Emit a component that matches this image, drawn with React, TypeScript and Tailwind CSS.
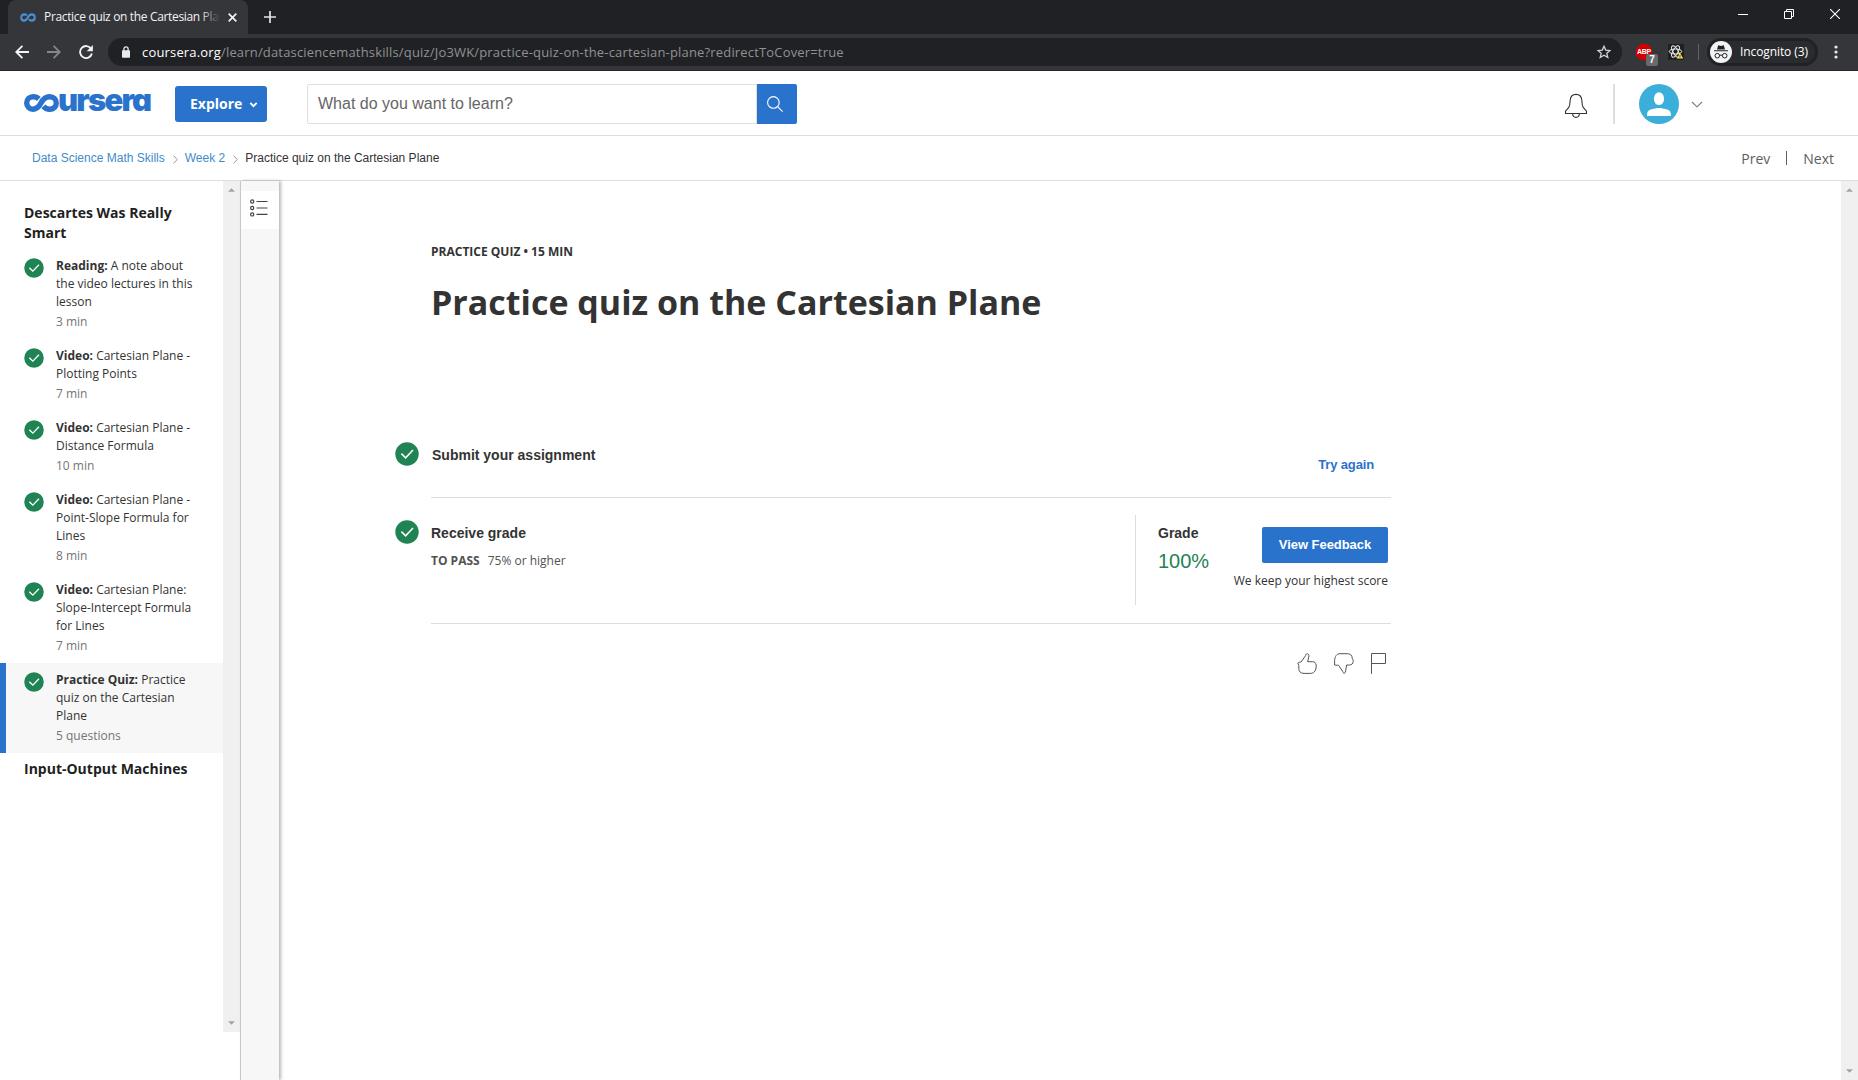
import React from "react";

const openSans = "font-['Open_Sans',sans-serif]";
const arial = "font-['Liberation_Sans',Arial,sans-serif]";

function Check({ size }: { size: number }) {
  return (
    <svg width={size} height={size} viewBox="0 0 24 24" className="block shrink-0">
      <circle cx="12" cy="12" r="11.7" fill="#1f8354" />
      <path d="M6.4 11.6 L10.6 15.8 L18 8" fill="none" stroke="#fff" strokeWidth="1.6" />
    </svg>
  );
}

function CourseraLoop({ width, height, stroke, color }: { width: number; height: number; stroke: number; color: string }) {
  return (
    <svg width={width} height={height} viewBox="0 0 36 18" className="block shrink-0" preserveAspectRatio="none">
      <path
        d="M15.2 5 C13.6 3.3 11.6 2.8 9.4 2.8 C5.6 2.8 2.8 5.6 2.8 9 C2.8 12.4 5.4 15.2 9.2 15.2 C13.2 15.2 15.2 12.9 17.2 9.4 C19.4 5.3 21.8 2.8 26.4 2.8 C30.4 2.8 33.2 5.6 33.2 9 C33.2 12.4 30.4 15.2 26.4 15.2 C23.6 15.2 21.6 14.2 20 12.2"
        fill="none"
        stroke={color}
        strokeWidth={stroke}
      />
    </svg>
  );
}

function TabStrip() {
  return (
    <div className="flex h-[34px] bg-[#202124]">
      <div className="ml-2 flex h-[34px] w-[240px] items-center rounded-t-lg bg-[#35363a] pl-3">
        <CourseraLoop width={16} height={9} stroke={4.6} color="#4a90d9" />
        <div className={`${openSans} relative ml-2 w-[176px] overflow-hidden text-[12px] leading-[18px] tracking-[-0.34px] whitespace-nowrap text-[#f1f3f4]`}>
          Practice quiz on the Cartesian Plane
          <div className="absolute top-0 right-0 h-full w-5 bg-linear-to-r from-transparent to-[#35363a]" />
        </div>
        <svg width="9" height="9" viewBox="0 0 9 9" className="ml-[8px]">
          <path d="M0.7 0.7 L8.3 8.3 M8.3 0.7 L0.7 8.3" stroke="#f1f3f4" strokeWidth="1.7" />
        </svg>
      </div>
      <svg width="12" height="12" viewBox="0 0 12 12" className="mt-[11px] ml-4">
        <path d="M6 0 V12 M0 6 H12" stroke="#e3e4e6" strokeWidth="1.7" />
      </svg>
      <div className="ml-auto flex items-start pt-[9px]">
        <svg width="10" height="11" viewBox="0 0 10 11" className="mr-9">
          <path d="M0 5.5 H10" stroke="#fff" />
        </svg>
        <svg width="10" height="10" viewBox="0 0 10 10" className="mr-9" fill="none" stroke="#fff">
          <path d="M0.5 2.5 H7.5 V9.5 H0.5 Z M2.5 2.5 V0.5 H9.5 V7.5 H7.5" />
        </svg>
        <svg width="10" height="10" viewBox="0 0 10 10" className="mr-[18px]">
          <path d="M0 0 L10 10 M10 0 L0 10" stroke="#fff" strokeWidth="1.1" />
        </svg>
      </div>
    </div>
  );
}

function Toolbar() {
  return (
    <div className="flex h-[37px] items-center border-b border-[#242527] bg-[#35363a]">
      <svg width="14" height="14" viewBox="0 0 14 14" className="ml-[15px]" fill="none" stroke="#f1f3f4" strokeWidth="1.8">
        <path d="M14 7 H1.4 M7.4 0.8 L1.2 7 L7.4 13.2" />
      </svg>
      <svg width="14" height="14" viewBox="0 0 14 14" className="ml-[18px]" fill="none" stroke="#85868a" strokeWidth="1.8">
        <path d="M0 7 H12.6 M6.6 0.8 L12.8 7 L6.6 13.2" />
      </svg>
      <svg width="14" height="14" viewBox="0 0 14 14" className="ml-[18px]">
        <path d="M12.2 3.9 A6 6 0 1 0 12.9 8.6" fill="none" stroke="#f1f3f4" strokeWidth="1.9" />
        <path d="M13.9 0 V6.2 H7.7 Z" fill="#f1f3f4" />
      </svg>
      <div className="ml-[15px] flex h-7 w-[1514px] items-center rounded-full bg-[#202124]">
        <svg width="8" height="12" viewBox="0 0 8 12" className="ml-[14px]">
          <path d="M1.9 5 V3 A2.1 2.1 0 0 1 6.1 3 V5" fill="none" stroke="#e8eaed" strokeWidth="1.3" />
          <rect x="0" y="4.2" width="8" height="7.6" rx="0.8" fill="#e8eaed" />
        </svg>
        <div className={`${openSans} ml-3 text-[13px] leading-5 tracking-[0.17px] whitespace-nowrap text-[#8f9195]`}>
          <span className="text-white">coursera.org</span>/learn/datasciencemathskills/quiz/Jo3WK/practice-quiz-on-the-cartesian-plane?redirectToCover=true
        </div>
        <svg width="14" height="14" viewBox="0 0 14 14" className="mr-[11px] ml-auto">
          <path d="M7 1.2 L8.7 5.1 L13 5.5 L9.8 8.3 L10.8 12.5 L7 10.3 L3.2 12.5 L4.2 8.3 L1 5.5 L5.3 5.1 Z" fill="none" stroke="#d0d2d5" strokeWidth="1.3" />
        </svg>
      </div>
      <div className="relative ml-[14px] h-4 w-4">
        <svg width="16" height="16" viewBox="0 0 16 16">
          <path d="M4.7 0 H11.3 L16 4.7 V11.3 L11.3 16 H4.7 L0 11.3 V4.7 Z" fill="#cf0000" />
        </svg>
        <div className={`${arial} absolute top-1 left-[1px] text-[7px] leading-[8px] font-bold tracking-[-0.3px] text-white`}>ABP</div>
        <div className={`${arial} absolute top-[10px] left-[10px] h-3 w-3 rounded-[2px] bg-[#68696b] text-center text-[10px] leading-3 font-bold text-white`}>7</div>
      </div>
      <svg width="16" height="16" viewBox="0 0 16 16" className="ml-4">
        <rect width="16" height="16" fill="#202020" />
        <g fill="none" stroke="#e8e8e8" strokeWidth="1">
          <ellipse cx="7.5" cy="7.5" rx="6.3" ry="2.5" />
          <ellipse cx="7.5" cy="7.5" rx="6.3" ry="2.5" transform="rotate(60 7.5 7.5)" />
          <ellipse cx="7.5" cy="7.5" rx="6.3" ry="2.5" transform="rotate(120 7.5 7.5)" />
        </g>
        <path d="M12 9 L15.3 14.6 H8.7 Z" fill="#f4e63c" />
        <path d="M12 11 V13.6" stroke="#555" />
      </svg>
      <div className="ml-[14px] h-4 w-px bg-[#606164]" />
      <div className="ml-2 flex h-7 w-[111px] items-center rounded-full border-[3px] border-[#202124] bg-[#2a2b2e]">
        <svg width="22" height="22" viewBox="0 0 22 22" className="shrink-0">
          <circle cx="11" cy="11" r="11" fill="#f1f3f4" />
          <path d="M7 8.5 L8.2 4.2 L11 4.9 L13.8 4.2 L15 8.5 Z M4 9.3 H18 V10.3 H4 Z" fill="#202124" />
          <g fill="none" stroke="#202124" strokeWidth="1">
            <circle cx="7.3" cy="14.7" r="2.3" />
            <circle cx="14.7" cy="14.7" r="2.3" />
            <path d="M9.6 14.4 Q11 13.7 12.4 14.4" />
          </g>
        </svg>
        <div className={`${openSans} ml-2 text-[12px] leading-4 tracking-[-0.1px] whitespace-nowrap text-white`}>Incognito (3)</div>
      </div>
      <svg width="4" height="14" viewBox="0 0 4 14" className="ml-4" fill="#e8eaed">
        <circle cx="2" cy="2" r="1.6" />
        <circle cx="2" cy="7" r="1.6" />
        <circle cx="2" cy="12" r="1.6" />
      </svg>
    </div>
  );
}

function SiteHeader() {
  return (
    <header className="flex h-[65px] items-center border-b border-[#dedede] bg-white pt-px">
      <div className="-mt-[2px] ml-6 flex h-[18px] w-[128px] items-center text-[#2a73cc]">
        <CourseraLoop width={35} height={18} stroke={5.6} color="#2a73cc" />
        <span className="relative -top-[3px] -ml-px font-['Inter',sans-serif] text-[31px] leading-[18px] font-black tracking-[-1.8px] [font-feature-settings:'cv11']">ursera</span>
      </div>
      <div className={`${openSans} ml-[23px] flex h-9 w-[92px] items-center rounded-[3px] bg-[#2a73cc] pl-[15px] text-[14px] font-bold text-white`}>
        Explore
        <svg width="9" height="6" viewBox="0 0 8 6" className="mt-[2px] ml-[7px]">
          <path d="M0.8 0.8 L4 4.2 L7.2 0.8" fill="none" stroke="#fff" strokeWidth="1.8" />
        </svg>
      </div>
      <div className="ml-10 flex h-10">
        <div className={`${arial} w-[450px] rounded-l-[2px] border border-[#dedede] pl-[10px] text-[16px] leading-[37px] text-[#666]`}>What do you want to learn?</div>
        <div className="flex w-10 items-center rounded-r-[2px] bg-[#2a73cc] pl-[10px]">
          <svg width="16" height="16" viewBox="0 0 16 16" fill="none" stroke="#fff" strokeWidth="1.1">
            <circle cx="6.4" cy="6.4" r="5.8" />
            <path d="M10.6 10.6 L15.6 15.6" />
          </svg>
        </div>
      </div>
      <svg width="24" height="26" viewBox="0 0 24 26" className="mt-[4px] ml-[767px]" fill="none" stroke="#333" strokeWidth="1.1">
        <path d="M1.5 20.5 V18.2 L4.8 14.4 C5.8 12.6 6 11 6.2 7.2 C6.6 3.2 9 1.4 12 1.4 C15 1.4 17.4 3.2 17.8 7.2 C18 11 18.2 12.6 19.2 14.4 L22.5 18.2 V20.5 Z" />
        <path d="M8.6 20.8 C8.8 25.6 15.2 25.6 15.4 20.8" />
      </svg>
      <div className="ml-[25px] h-10 w-[2px] bg-[#dedede]" />
      <svg width="40" height="40" viewBox="0 0 40 40" className="ml-6">
        <circle cx="20" cy="20" r="20" fill="#3caeda" />
        <ellipse cx="20" cy="14.7" rx="5.1" ry="6.4" fill="#fff" />
        <path d="M8 32 C8 27 9.5 25.8 14 25 C18 23.8 22 23.8 26 25 C30.5 25.8 32 27 32 32 Z" fill="#fff" />
      </svg>
      <svg width="12" height="7" viewBox="0 0 12 7" className="mt-[2px] ml-3">
        <path d="M1 1 L6 5.8 L11 1" fill="none" stroke="#777" strokeWidth="1.1" />
      </svg>
    </header>
  );
}

function Separator() {
  return (
    <svg width="5" height="9" viewBox="0 0 5 9" className="mt-[3px] mr-[7px] ml-2">
      <path d="M0.6 0.6 L4.2 4.5 L0.6 8.4" fill="none" stroke="#999" />
    </svg>
  );
}

function Breadcrumbs() {
  return (
    <nav className={`${arial} flex h-[45px] items-center border-b border-[#dedede] pl-8 text-[12px] text-[#428bca]`}>
      <span>Data Science Math Skills</span>
      <Separator />
      <span>Week 2</span>
      <Separator />
      <span className="text-[#333]">Practice quiz on the Cartesian Plane</span>
      <div className={`${openSans} mr-6 ml-auto flex items-center text-[14px] text-[#5e5e5e]`}>
        <span>Prev</span>
        <span className="mx-4 h-[14px] w-px bg-[#5e5e5e]" />
        <span>Next</span>
      </div>
    </nav>
  );
}

type Item = { kind: string; lines: string[]; meta: string; active?: boolean };

const items: Item[] = [
  { kind: "Reading:", lines: ["A note about", "the video lectures in this", "lesson"], meta: "3 min" },
  { kind: "Video:", lines: ["Cartesian Plane -", "Plotting Points"], meta: "7 min" },
  { kind: "Video:", lines: ["Cartesian Plane -", "Distance Formula"], meta: "10 min" },
  { kind: "Video:", lines: ["Cartesian Plane -", "Point-Slope Formula for", "Lines"], meta: "8 min" },
  { kind: "Video:", lines: ["Cartesian Plane:", "Slope-Intercept Formula", "for Lines"], meta: "7 min" },
  { kind: "Practice Quiz:", lines: ["Practice", "quiz on the Cartesian", "Plane"], meta: "5 questions", active: true },
];

function LessonItem({ item }: { item: Item }) {
  return (
    <div className={item.active ? "flex border-l-[6px] border-[#2a73cc] bg-[#f7f7f7] py-2 pl-[18px]" : "flex py-2 pl-6"}>
      <div className="mt-px">
        <Check size={20} />
      </div>
      <div className="ml-3 text-[12px] leading-[18px] whitespace-nowrap text-[#333]">
        {item.lines.map((line, i) => (
          <div key={line}>
            {i === 0 && <b>{item.kind} </b>}
            {line}
          </div>
        ))}
        <div className="mt-[2px] text-[#757575]">{item.meta}</div>
      </div>
    </div>
  );
}

function Scrollbar() {
  return (
    <div className="flex h-full w-[17px] shrink-0 flex-col items-center justify-between bg-[#f0f0f0] pt-[7px] pb-[7px]">
      <svg width="7" height="4" viewBox="0 0 8 4">
        <path d="M4 0 L8 4 H0 Z" fill="#a3a3a3" />
      </svg>
      <svg width="7" height="4" viewBox="0 0 8 4">
        <path d="M0 0 H8 L4 4 Z" fill="#a3a3a3" />
      </svg>
    </div>
  );
}

function Sidebar() {
  return (
    <aside className={`${openSans} flex w-[240px] shrink-0`}>
      <div className="w-[223px] pt-[22px]">
        <h2 className="mb-[6px] pl-6 text-[14px] leading-5 font-bold text-[#1f1f1f]">
          Descartes Was Really
          <br />
          Smart
        </h2>
        {items.map((item, i) => (
          <LessonItem key={i} item={item} />
        ))}
        <h2 className="mt-[6px] pl-6 text-[14px] leading-5 font-bold text-[#1f1f1f]">Input-Output Machines</h2>
      </div>
      <div className="h-[851px]">
        <Scrollbar />
      </div>
    </aside>
  );
}

function Rail() {
  return (
    <div className="relative w-[39px] shrink-0 border-l border-[#c7c7c7] bg-[#f7f7f7] pt-[10px] shadow-[2px_0_3px_rgba(0,0,0,0.28)]">
      <div className="flex h-[38px] items-center bg-white pl-[9px]">
        <svg width="18" height="18" viewBox="0 0 18 18" fill="none" stroke="#444" strokeWidth="1.2" className="-mt-1">
          <circle cx="2.2" cy="2.5" r="1.6" />
          <circle cx="2.2" cy="9" r="1.6" />
          <circle cx="2.2" cy="15.4" r="1.6" />
          <path d="M6.5 2.5 H17.5 M6.5 9 H17.5 M6.5 15.4 H17.5" />
        </svg>
      </div>
    </div>
  );
}

function FeedbackIcons() {
  return (
    <div className="mt-[29px] flex justify-end gap-[17px] pr-[4px] text-[#555]">
      <svg width="20" height="21" viewBox="0 0 20 21" fill="none" stroke="currentColor">
        <path d="M0.8 10 C1.8 9 3 9.2 4 9 L8.6 2.6 C8.8 1 9.6 0.6 10.4 0.7 C11.8 0.9 12.2 2.4 11.8 4 L10.6 8.7 H15.6 C17.6 8.7 18.8 10 19.2 12 C19.5 14.6 18.6 17.6 17.2 19 C16.2 20 14.8 20.4 13.2 20.4 H7 C3.6 20.4 1.8 18.6 1.8 15.4 V12.4 Z" />
      </svg>
      <svg width="20" height="21" viewBox="0 0 20 21" fill="none" stroke="currentColor">
        <path d="M0.6 12 V7.6 C0.8 3.2 2.8 0.7 6 0.7 H13.2 C16.6 0.7 18.2 2.6 18.2 5.2 C18.6 6.4 19.4 7.2 19.3 8.6 C19.1 10.6 17.4 12 15.4 12 H12.6 L11.6 17.8 C11.4 19.8 10.8 20.4 9.8 20.2 C9 20 8.8 19 8.6 18.2 L4.6 12.4 C4 11.8 2.6 12.6 0.6 12 Z" />
      </svg>
      <svg width="16" height="21" viewBox="0 0 16 21" fill="none" stroke="currentColor">
        <path d="M0.5 20.8 V0.5 H14.5 V10.5 H0.5" />
      </svg>
    </div>
  );
}

function Main() {
  return (
    <main className={`${openSans} flex-1 text-[#333]`}>
      <div className="ml-[152px] w-[960px]">
        <div className="pt-[61px] text-[12px] leading-5 font-bold">PRACTICE QUIZ • 15 MIN</div>
        <h1 className="mt-[18px] text-[34px] leading-[44px] font-bold whitespace-nowrap">Practice quiz on the Cartesian Plane</h1>

        <section className="-ml-9 flex pt-[118px]">
          <Check size={24} />
          <div className={`${arial} ml-[13px] pt-[5px] text-[14px] leading-4 font-bold`}>Submit your assignment</div>
          <div className={`${arial} mt-[15px] mr-[17px] ml-auto h-[15px] text-[13px] leading-4 font-bold tracking-[-0.15px] text-[#2a73cc]`}>Try again</div>
        </section>
        <div className="mt-[25px] h-px bg-[#dedede]" />

        <section className="mt-[17px] -ml-9 flex h-[90px]">
          <div className="pt-[5px]">
            <Check size={24} />
          </div>
          <div className="ml-3 pt-[10px]">
            <div className={`${arial} text-[14px] leading-4 font-bold`}>Receive grade</div>
            <div className="mt-[10px] flex gap-2 text-[12px] leading-5 text-[#525252]">
              <b>TO PASS</b>
              <span>75% or higher</span>
            </div>
          </div>
          <div className="ml-auto flex w-[256px] border-l border-[#dedede]">
            <div className={`${arial} ml-[22px] pt-[10px]`}>
              <div className="text-[14px] leading-4 font-bold">Grade</div>
              <div className="mt-2 text-[20px] leading-6 text-[#1f8354]">100%</div>
            </div>
            <div className="mr-[3px] ml-auto flex flex-col items-end pt-3">
              <div className={`${arial} h-9 w-[126px] rounded-[2px] bg-[#2a73cc] text-center text-[13px] leading-[35px] font-bold tracking-[-0.05px] text-white`}>View Feedback</div>
              <div className="mt-2 text-[12px] leading-5 whitespace-nowrap">We keep your highest score</div>
            </div>
          </div>
        </section>
        <div className="mt-[18px] h-px bg-[#dedede]" />
        <FeedbackIcons />
      </div>
    </main>
  );
}

export default function App() {
  return (
    <div className="flex h-[1080px] w-[1858px] flex-col overflow-hidden bg-white">
      <TabStrip />
      <Toolbar />
      <SiteHeader />
      <Breadcrumbs />
      <div className="flex min-h-0 flex-1">
        <Sidebar />
        <Rail />
        <Main />
        <Scrollbar />
      </div>
    </div>
  );
}
